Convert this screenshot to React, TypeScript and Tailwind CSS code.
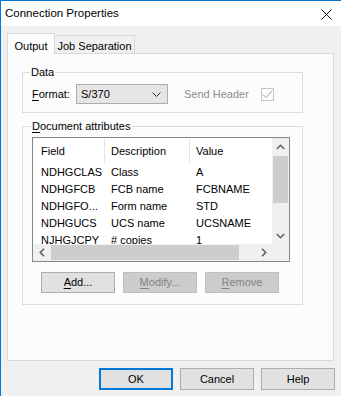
import React from "react";

const font = { fontFamily: '"Liberation Sans", Arial, sans-serif' };

function U({ children }: { children: React.ReactNode }) {
  return <span className="underline underline-offset-[2px]">{children}</span>;
}

const rows = [
  ["NDHGCLAS", "Class", "A"],
  ["NDHGFCB", "FCB name", "FCBNAME"],
  ["NDHGFO...", "Form name", "STD"],
  ["NDHGUCS", "UCS name", "UCSNAME"],
  ["NJHGJCPY", "# copies", "1"],
];

function Btn({
  children,
  disabled,
  primary,
  className = "",
}: {
  children: React.ReactNode;
  disabled?: boolean;
  primary?: boolean;
  className?: string;
}) {
  const base = "flex items-center justify-center text-[11px] leading-none";
  if (primary)
    return (
      <div className={`${base} border-2 border-[#0078d7] bg-[#e1e1e1] text-black ${className}`}>
        {children}
      </div>
    );
  if (disabled)
    return (
      <div className={`${base} border border-[#bfbfbf] bg-[#cccccc] text-[#838383] ${className}`}>
        {children}
      </div>
    );
  return (
    <div className={`${base} border border-[#adadad] bg-[#e1e1e1] text-black ${className}`}>
      {children}
    </div>
  );
}

export default function App() {
  return (
    <div
      className="w-[341px] h-[396px] bg-[#f0f0f0] border-l border-t border-[#0078d7] flex flex-col text-black overflow-hidden"
      style={font}
    >
      {/* Title bar */}
      <div className="h-[25px] bg-white flex items-center justify-between pl-[4px] pr-[9px] shrink-0">
        <span className="text-[11.5px]">Connection Properties</span>
        <svg width="11" height="11" viewBox="0 0 11 11" className="mt-[1px]">
          <path d="M0.5 0.5 L10.5 10.5 M10.5 0.5 L0.5 10.5" stroke="#111" strokeWidth="1" />
        </svg>
      </div>

      {/* Tabs */}
      <div className="mt-[7px] ml-[6px] h-[20px] flex items-end shrink-0 text-[11px]">
        <div className="relative z-10 -mb-px h-[21px] w-[48px] border-l border-t border-r border-[#d9d9d9] bg-[#fcfcfc] flex items-start justify-center pt-[4px]">
          Output
        </div>
        <div className="h-[18px] w-[80px] border-t border-r border-[#d9d9d9] bg-[#f0f0f0] flex items-start justify-center pt-[2px]">
          Job Separation
        </div>
      </div>

      {/* Panel */}
      <div className="ml-[6px] w-[327px] h-[308px] border border-[#d9d9d9] bg-[#fcfcfc] shrink-0 text-[11px] flex flex-col">
        {/* Data group */}
        <fieldset className="mt-[11px] ml-[14px] w-[281px] border border-[#dcdcdc] pb-[8px] pt-[5px]">
          <legend className="ml-[7px] px-[1px] leading-[14px]">Data</legend>
          <div className="flex items-center h-[20px]">
            <span className="ml-[9px] w-[44px]">
              <U>F</U>ormat:
            </span>
            <div className="w-[92px] h-[20px] border border-[#adadad] bg-[#e5e5e5] flex items-center justify-between pl-[4px] pr-[6px]">
              <span>S/370</span>
              <svg width="9" height="5" viewBox="0 0 9 5">
                <path d="M0.5 0.5 L4.5 4.5 L8.5 0.5" stroke="#333" strokeWidth="1" fill="none" />
              </svg>
            </div>
            <span className="ml-[16px] text-[#8d8d8d]">Send Header</span>
            <div className="ml-[12px] w-[13px] h-[13px] border border-[#c4c4c4] bg-[#fcfcfc] flex items-center justify-center">
              <svg width="11" height="9" viewBox="0 0 11 9">
                <path d="M1 4.5 L4 7.5 L10 1" stroke="#c4c4c4" strokeWidth="1.2" fill="none" />
              </svg>
            </div>
          </div>
        </fieldset>

        {/* Document attributes group */}
        <fieldset className="mt-[6px] ml-[14px] w-[281px] border border-[#dcdcdc] pt-[4px] pb-[11px]">
          <legend className="ml-[8px] px-[1px] leading-[14px]">
            <U>D</U>ocument attributes
          </legend>
          <div className="ml-[9px] w-[258px] h-[125px] border border-[#828790] bg-white flex flex-col">
            <div className="flex h-[106px]">
              {/* table */}
              <div className="flex-1 overflow-hidden">
                <div className="flex h-[26px] items-center">
                  <div className="w-[71px] pl-[8px]">Field</div>
                  <div className="w-[85px] pl-[6px] border-l border-[#e5e5e5] h-[24px] flex items-center">Description</div>
                  <div className="flex-1 pl-[6px] border-l border-[#e5e5e5] h-[24px] flex items-center">Value</div>
                </div>
                {rows.map((r) => (
                  <div key={r[0]} className="flex h-[17px] items-center">
                    <div className="w-[71px] pl-[8px] whitespace-nowrap">{r[0]}</div>
                    <div className="w-[85px] pl-[7px] whitespace-nowrap">{r[1]}</div>
                    <div className="flex-1 pl-[7px] whitespace-nowrap">{r[2]}</div>
                  </div>
                ))}
              </div>
              {/* vertical scrollbar */}
              <div className="w-[17px] bg-[#f0f0f0] flex flex-col items-stretch">
                <div className="h-[17px] flex items-center justify-center">
                  <svg width="9" height="6" viewBox="0 0 9 6">
                    <path d="M0.8 5 L4.5 1.3 L8.2 5" stroke="#606060" strokeWidth="1.6" fill="none" />
                  </svg>
                </div>
                <div className="mt-[1px] h-[47px] bg-[#cdcdcd] mx-[1px]" />
                <div className="flex-1" />
                <div className="h-[17px] flex items-center justify-center">
                  <svg width="9" height="6" viewBox="0 0 9 6">
                    <path d="M0.8 1 L4.5 4.7 L8.2 1" stroke="#606060" strokeWidth="1.6" fill="none" />
                  </svg>
                </div>
              </div>
            </div>
            {/* horizontal scrollbar */}
            <div className="flex h-[17px]">
              <div className="flex-1 bg-[#f0f0f0] flex items-center">
                <div className="w-[17px] h-[17px] flex items-center justify-center">
                  <svg width="6" height="9" viewBox="0 0 6 9">
                    <path d="M5 0.8 L1.3 4.5 L5 8.2" stroke="#606060" strokeWidth="1.6" fill="none" />
                  </svg>
                </div>
                <div className="ml-[1px] w-[188px] h-[15px] bg-[#cdcdcd]" />
                <div className="flex-1" />
                <div className="w-[17px] h-[17px] flex items-center justify-center">
                  <svg width="6" height="9" viewBox="0 0 6 9">
                    <path d="M1 0.8 L4.7 4.5 L1 8.2" stroke="#606060" strokeWidth="1.6" fill="none" />
                  </svg>
                </div>
              </div>
              <div className="w-[17px] bg-[#f0f0f0]" />
            </div>
          </div>
          <div className="mt-[10px] ml-[18px] flex gap-[8px]">
            <Btn className="w-[74px] h-[21px]">
              <U>A</U>dd...
            </Btn>
            <Btn disabled className="w-[74px] h-[21px]">
              <U>M</U>odify...
            </Btn>
            <Btn disabled className="w-[74px] h-[21px]">
              <U>R</U>emove
            </Btn>
          </div>
        </fieldset>
      </div>

      {/* Bottom buttons */}
      <div className="mt-[7px] mr-[6px] flex justify-end gap-[7px]">
        <Btn primary className="w-[74px] h-[22px]">OK</Btn>
        <Btn className="w-[74px] h-[22px]">Cancel</Btn>
        <Btn className="w-[74px] h-[22px]">Help</Btn>
      </div>
    </div>
  );
}
